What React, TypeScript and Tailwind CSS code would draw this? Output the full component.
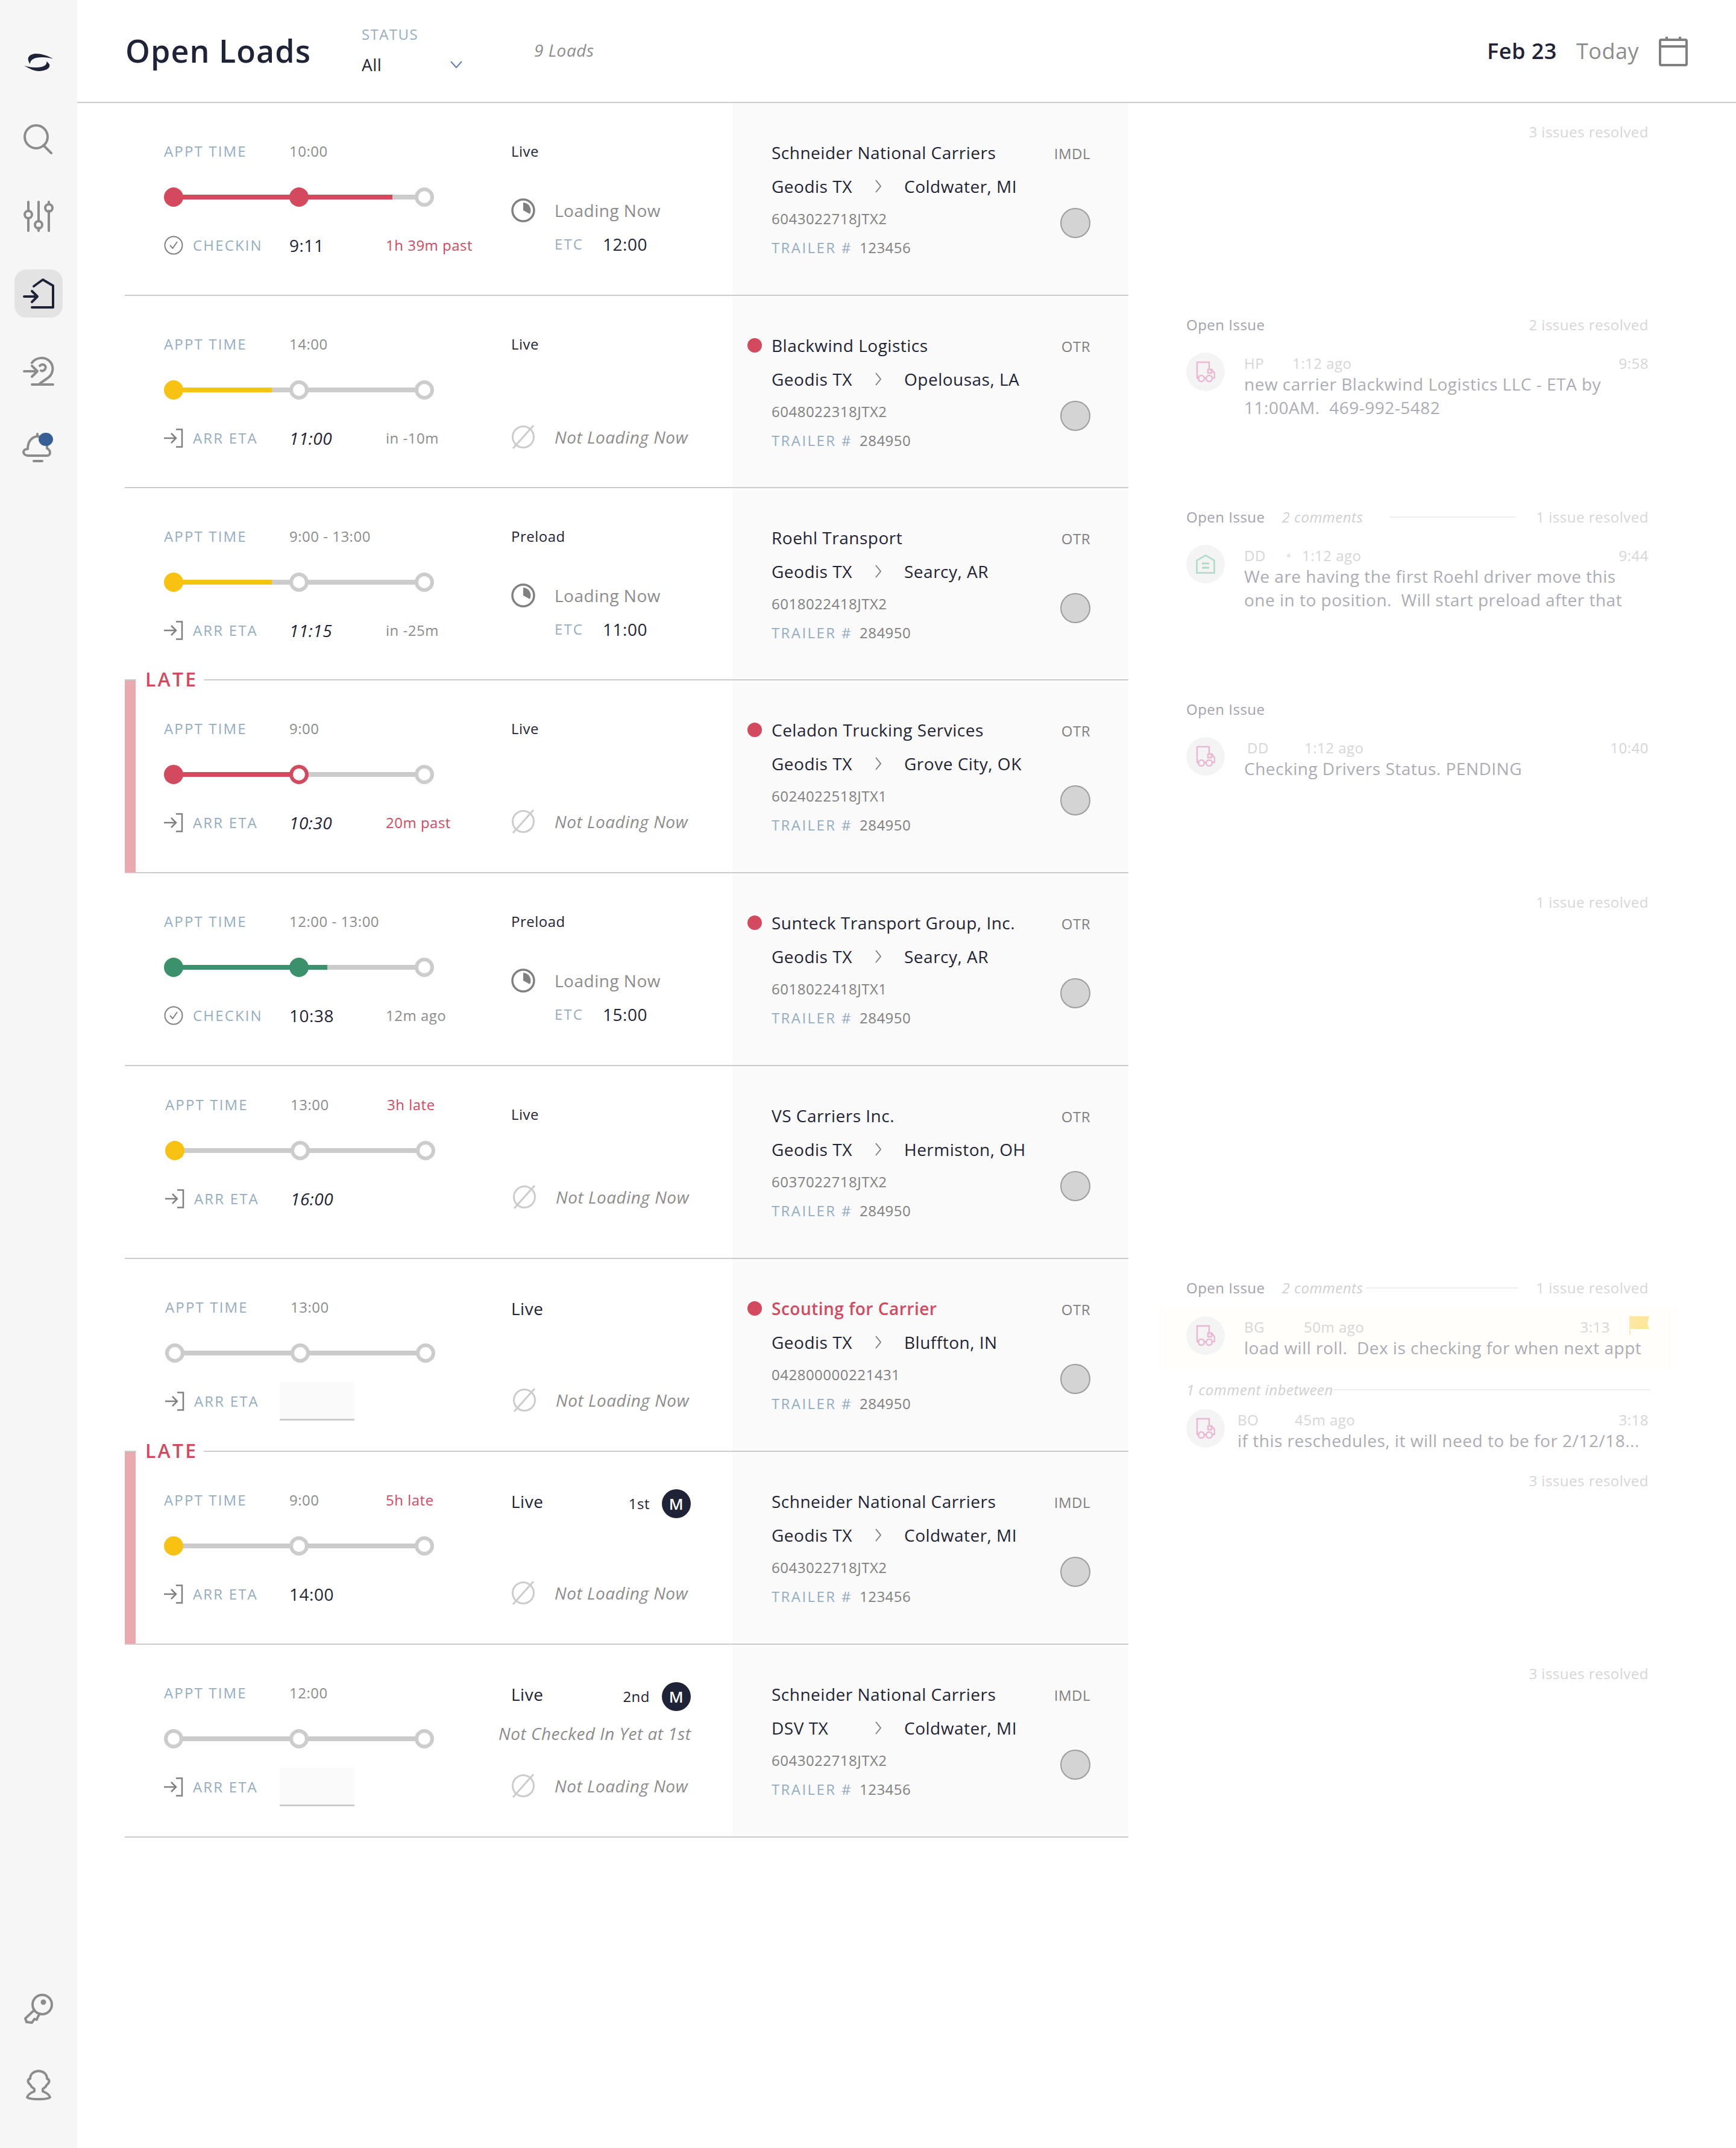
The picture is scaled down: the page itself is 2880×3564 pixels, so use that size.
import React from "react";

const DARK = "#1f2337";

function Logo() {
  return (
    <svg width="48" height="29" viewBox="0 0 48 29">
      <path d="M48 8.4C38 3 28 0 20 0C11 0 5 5 7 11C7.5 14 9 16 10 17C10 12 13 9 20 7C29 5 39 6 48 8.4Z" fill={DARK} />
      <path d="M0 20C9 25 17 29 24 29C34 29 44 25 42 18C41 16 39 14 37 13C38 17 36 20 29 22C20 24 10 23 0 20Z" fill={DARK} />
    </svg>
  );
}
const sideStroke = { fill: "none", stroke: "#8c8c8c", strokeWidth: 4, strokeLinecap: "round" as const, strokeLinejoin: "round" as const };
function SearchIcon() {
  return (
    <svg width="52" height="52" viewBox="0 0 52 52" {...sideStroke}>
      <circle cx="22" cy="22" r="19" />
      <path d="M34 36L47 49" />
    </svg>
  );
}
function SlidersIcon() {
  return (
    <svg width="52" height="52" viewBox="0 0 52 52" {...sideStroke}>
      <path d="M9 2V17M9 29V50M26 2V34M26 45V50M43 2V6M43 17V50" />
      <circle cx="9" cy="23" r="6" />
      <circle cx="26" cy="40" r="6" />
      <circle cx="43" cy="12" r="6" />
    </svg>
  );
}
function HomeInIcon({ color }: { color: string }) {
  return (
    <svg width="52" height="52" viewBox="0 0 52 52" fill="none" stroke={color} strokeWidth="4" strokeLinecap="round" strokeLinejoin="round">
      <path d="M18 14L33 3L50 13V49H15" />
      <path d="M2 31H24M15 22L24 31L15 40" />
    </svg>
  );
}
function TurnInIcon() {
  return (
    <svg width="52" height="52" viewBox="0 0 52 52" {...sideStroke}>
      <path d="M15 12C21 3 36 1 44 9C53 18 50 32 40 38L30 45" />
      <path d="M28 17C33 12 40 17 37 22C36 25 32 26 30 25" />
      <path d="M2 26H24M15 17L24 26L15 35" />
      <path d="M15 48H50M30 45L26 48" />
    </svg>
  );
}
function BellIcon() {
  return (
    <svg width="56" height="56" viewBox="0 0 56 56" className="overflow-visible">
      <path d="M26 9V5" stroke="#8c8c8c" strokeWidth="4" strokeLinecap="round" />
      <path d="M10 30C10 18 16 10 26 9C33 9 40 14 42 22V29C46 31 47 33 47 36C47 39 45 41 42 41H10C6 41 3 38 3 35C3 32 6 30 10 30Z" fill="none" stroke="#8c8c8c" strokeWidth="4" strokeLinejoin="round" />
      <path d="M20 50H34" stroke="#8c8c8c" strokeWidth="4" strokeLinecap="round" />
      <ellipse cx="40" cy="14" rx="12" ry="11" fill="#365f96" />
    </svg>
  );
}
function KeyIcon() {
  return (
    <svg width="52" height="52" viewBox="0 0 52 52" {...sideStroke}>
      <circle cx="32" cy="20" r="16" />
      <path d="M19 29L4 43L6 49L15 50L19 44L23 45L25 40L28 35" />
      <circle cx="34" cy="16" r="2.5" fill="#8c8c8c" />
    </svg>
  );
}
function UserIcon() {
  return (
    <svg width="44" height="52" viewBox="0 0 44 52" {...sideStroke}>
      <path d="M8 15C8 -2 36 -2 36 15C40 16 41 20 37 24C35 25 35 27 33 29L29 32V36C34 38 40 41 41 46C36 50 8 50 3 46C4 41 10 38 15 36V32L11 29C9 27 9 25 7 24C3 20 4 16 8 15Z" />
    </svg>
  );
}
function CalendarIcon() {
  return (
    <svg width="48" height="50" viewBox="0 0 48 50" fill="none" stroke="#808080" strokeWidth="4">
      <rect x="2" y="6" width="44" height="42" rx="2" />
      <path d="M2 17H46M13 1V8M35 1V8" />
    </svg>
  );
}
function Chevron() {
  return (
    <svg width="22" height="14" viewBox="0 0 22 14" fill="none" stroke="#5b7fb5" strokeWidth="2">
      <path d="M2 2L11 12L20 2" />
    </svg>
  );
}
function CheckIcon() {
  return (
    <svg width="32" height="32" viewBox="0 0 32 32" fill="none" stroke="#808080" strokeWidth="2">
      <circle cx="16" cy="16" r="14.5" />
      <path d="M10 16L14.5 21L22 10" />
    </svg>
  );
}
function ArrIcon() {
  return (
    <svg width="32" height="32" viewBox="0 0 32 32" fill="none" stroke="#808080" strokeWidth="2.5">
      <path d="M20 1.5H30V30.5H20" />
      <path d="M0 16H20M12 8L20 16L12 24" />
    </svg>
  );
}
function ClockIcon() {
  return (
    <svg width="40" height="40" viewBox="0 0 40 40">
      <circle cx="20" cy="20" r="18" fill="none" stroke="#808080" strokeWidth="3.5" />
      <path d="M20 7A13 13 0 0 1 31 26L20 20Z" fill="#808080" />
    </svg>
  );
}
function NoIcon() {
  return (
    <svg width="40" height="40" viewBox="0 0 40 40" fill="none" stroke="#cccccc" strokeWidth="3">
      <circle cx="20" cy="20" r="17.5" />
      <path d="M37 1L3 39" />
    </svg>
  );
}
function TruckIcon() {
  return (
    <svg width="32" height="36" viewBox="0 0 32 36" fill="none" stroke="#e9b8d3" strokeWidth="2.5">
      <path d="M6 28H2V2H22V14H26L31 20V28H26" />
      <path d="M20 14H26V20H20Z" />
      <path d="M14 28H18" />
      <circle cx="9" cy="29" r="5" />
      <circle cx="22" cy="29" r="5" />
    </svg>
  );
}
function HouseIcon() {
  return (
    <svg width="32" height="32" viewBox="0 0 32 32" fill="none" stroke="#acdcc8" strokeWidth="2.5">
      <path d="M1.5 30.5V10L16 1.5L30.5 10V30.5Z" />
      <path d="M10 15H22M10 22H22" strokeWidth="3" />
    </svg>
  );
}
function FlagIcon() {
  return (
    <svg width="34" height="32" viewBox="0 0 34 32">
      <path d="M0 0H2V32H0Z" fill="#fdeab0" />
      <path d="M2 1H33L30 12L33 22H2Z" fill="#fde69e" />
    </svg>
  );
}

type Stop = "solid" | "ring" | "accent-ring";
function Dot({ kind, color }: { kind: Stop; color: string }) {
  if (kind === "solid") return <span className="w-8 h-8 rounded-full shrink-0 z-10" style={{ background: color }} />;
  return (
    <span
      className="w-8 h-8 rounded-full shrink-0 bg-white border-[6px] z-10"
      style={{ borderColor: kind === "accent-ring" ? color : "#cccccc" }}
    />
  );
}
function Track({ color, stops, fill }: { color: string; stops: Stop[]; fill: number }) {
  return (
    <div className="relative w-[448px] h-8 flex items-center justify-between">
      <div className="absolute left-2 right-2 top-3 h-2 bg-[#cccccc]" />
      <div className="absolute left-2 top-3 h-2" style={{ width: fill, background: color }} />
      {stops.map((s, i) => (
        <Dot key={i} kind={s} color={color} />
      ))}
    </div>
  );
}

type Load = {
  h: number;
  late?: boolean;
  shift?: boolean;
  raised?: boolean;
  appt: string;
  apptNote?: string;
  color: string;
  stops: Stop[];
  fill: number;
  check: boolean;
  time?: string;
  timeStyle?: "italic" | "upright";
  note?: string;
  noteRed?: boolean;
  kind: string;
  kindBig?: boolean;
  stop?: string;
  notChecked?: boolean;
  etc?: string;
  carrier: string;
  carrierRed?: boolean;
  dot?: boolean;
  mode: string;
  origin: string;
  dest: string;
  id: string;
  trailer: string;
};

const RED = "#d3495e";
const YEL = "#f8c212";
const GRN = "#3a916c";
const R: Stop = "ring";
const S: Stop = "solid";

const loads: Load[] = [
  { h: 320, appt: "10:00", color: RED, stops: [S, S, R], fill: 371, check: true, time: "9:11", timeStyle: "upright", note: "1h 39m past", noteRed: true, kind: "Live", etc: "12:00", carrier: "Schneider National Carriers", mode: "IMDL", origin: "Geodis TX", dest: "Coldwater, MI", id: "6043022718JTX2", trailer: "123456" },
  { h: 319, appt: "14:00", color: YEL, stops: [S, R, R], fill: 171, check: false, time: "11:00", timeStyle: "italic", note: "in -10m", kind: "Live", carrier: "Blackwind Logistics", dot: true, mode: "OTR", origin: "Geodis TX", dest: "Opelousas, LA", id: "6048022318JTX2", trailer: "284950" },
  { h: 319, appt: "9:00 - 13:00", color: YEL, stops: [S, R, R], fill: 171, check: false, time: "11:15", timeStyle: "italic", note: "in -25m", kind: "Preload", etc: "11:00", carrier: "Roehl Transport", mode: "OTR", origin: "Geodis TX", dest: "Searcy, AR", id: "6018022418JTX2", trailer: "284950" },
  { h: 320, late: true, appt: "9:00", color: RED, stops: [S, "accent-ring", R], fill: 208, check: false, time: "10:30", timeStyle: "italic", note: "20m past", noteRed: true, kind: "Live", carrier: "Celadon Trucking Services", dot: true, mode: "OTR", origin: "Geodis TX", dest: "Grove City, OK", id: "6024022518JTX1", trailer: "284950" },
  { h: 320, appt: "12:00 - 13:00", color: GRN, stops: [S, S, R], fill: 263, check: true, time: "10:38", timeStyle: "upright", note: "12m ago", kind: "Preload", etc: "15:00", carrier: "Sunteck Transport Group, Inc.", dot: true, mode: "OTR", origin: "Geodis TX", dest: "Searcy, AR", id: "6018022418JTX1", trailer: "284950" },
  { h: 320, shift: true, raised: true, appt: "13:00", apptNote: "3h late", color: YEL, stops: [S, R, R], fill: 0, check: false, time: "16:00", timeStyle: "italic", kind: "Live", carrier: "VS Carriers Inc.", mode: "OTR", origin: "Geodis TX", dest: "Hermiston, OH", id: "6037022718JTX2", trailer: "284950" },
  { h: 320, shift: true, appt: "13:00", color: YEL, stops: [R, R, R], fill: 0, check: false, kind: "Live", kindBig: true, carrier: "Scouting for Carrier", carrierRed: true, dot: true, mode: "OTR", origin: "Geodis TX", dest: "Bluffton, IN", id: "042800000221431", trailer: "284950" },
  { h: 320, late: true, appt: "9:00", apptNote: "5h late", color: YEL, stops: [S, R, R], fill: 0, check: false, time: "14:00", timeStyle: "upright", kind: "Live", kindBig: true, stop: "1st", carrier: "Schneider National Carriers", mode: "IMDL", origin: "Geodis TX", dest: "Coldwater, MI", id: "6043022718JTX2", trailer: "123456" },
  { h: 320, appt: "12:00", color: YEL, stops: [R, R, R], fill: 0, check: false, kind: "Live", kindBig: true, stop: "2nd", notChecked: true, carrier: "Schneider National Carriers", mode: "IMDL", origin: "DSV TX", dest: "Coldwater, MI", id: "6043022718JTX2", trailer: "123456" },
];

function LoadCard({ l }: { l: Load }) {
  const loadingGap = l.notChecked ? "mt-[47px]" : l.raised ? "mt-[97px]" : l.kindBig ? "mt-[112px]" : "mt-[114px]";
  return (
    <div className={`flex w-[1008px] shrink-0 ${l.shift ? "pl-[67px]" : "pl-[65px]"}`}>
      <div className={`${l.shift ? "w-[574px]" : "w-[576px]"} shrink-0 flex flex-col ${l.raised ? "pt-[44px]" : "pt-[60px]"}`}>
        <div className="h-10 flex items-center text-[24px]">
          <span className="w-[208px] tracking-[0.09em] text-[#94adc3]">APPT TIME</span>
          <span className="w-[160px] text-[#8c8c8c] whitespace-nowrap">{l.appt}</span>
          {l.apptNote && <span className="text-[#d3495e]">{l.apptNote}</span>}
        </div>
        <div className="mt-[40px]">
          <Track color={l.color} stops={l.stops} fill={l.fill} />
        </div>
        <div className="mt-[44px] h-10 flex items-center">
          <span className="w-8 shrink-0 flex">{l.check ? <CheckIcon /> : <ArrIcon />}</span>
          <span className="w-[176px] pl-4 text-[24px] tracking-[0.09em] text-[#94adc3]">{l.check ? "CHECKIN" : "ARR ETA"}</span>
          {l.time ? (
            <span className={`w-[160px] text-[28px] text-[#1f2337] ${l.timeStyle === "italic" ? "italic" : "font-medium"}`}>{l.time}</span>
          ) : (
            <span className={`w-[124px] h-16 ${l.shift ? "-ml-[18px]" : "-ml-[16px]"} mr-[52px] bg-[#fafafa] border-b-[3px] border-[#cccccc]`} />
          )}
          {l.note && <span className={`text-[24px] whitespace-nowrap ${l.noteRed ? "text-[#d3495e]" : "text-[#8c8c8c]"}`}>{l.note}</span>}
        </div>
      </div>
      <div className={`w-[296px] shrink-0 flex flex-col ${l.kindBig ? "pt-[62px]" : "pt-[60px]"}`}>
        <div className="h-10 flex items-center justify-between">
          <span className={`${l.kindBig ? "text-[28px]" : "text-[24px]"} text-[#1f2337]`}>{l.kind}</span>
          {l.stop && (
            <span className="mt-2 -mr-[2px] flex items-center gap-[20px] text-[24px] text-[#1f2337]">
              {l.stop}
              <span className="w-12 h-12 rounded-full bg-[#1f2337] text-white text-[26px] font-semibold flex items-center justify-center">M</span>
            </span>
          )}
        </div>
        {l.notChecked ? (
          <div className="mt-[25px] -ml-[21px] h-10 text-[28px] italic text-[#8c8c8c] whitespace-nowrap leading-10">Not Checked In Yet at 1st</div>
        ) : null}
        {l.etc ? (
          <>
            <div className="mt-[58px] h-10 flex items-center text-[28px] text-[#8c8c8c]">
              <span className="w-[72px] flex shrink-0"><ClockIcon /></span>Loading Now
            </div>
            <div className="mt-[16px] h-10 flex items-center pl-[72px]">
              <span className="w-[80px] text-[24px] tracking-[0.09em] text-[#94adc3]">ETC</span>
              <span className="text-[28px] font-medium text-[#1f2337]">{l.etc}</span>
            </div>
          </>
        ) : (
          <div className={`${loadingGap} ${l.shift ? "pl-[2px]" : ""} h-10 flex items-center text-[28px] italic text-[#8c8c8c] whitespace-nowrap`}>
            <span className="w-[72px] flex shrink-0"><NoIcon /></span>Not Loading Now
          </div>
        )}
      </div>
    </div>
  );
}

function InfoPanel({ l }: { l: Load }) {
  return (
    <div className="w-[657px] shrink-0 bg-[#fafafa] flex pl-[65px] pr-[63px] pt-[62px] justify-between">
      <div className="flex flex-col relative">
        <div className={`h-10 flex items-center text-[28px] whitespace-nowrap ${l.carrierRed ? "text-[#d3495e] font-semibold" : "text-[#1f2337]"}`}>
          {l.dot && <span className="absolute -left-10 top-2 w-6 h-6 rounded-full bg-[#d3495e]" />}
          {l.carrier}
        </div>
        <div className="mt-4 h-10 flex items-center text-[28px] text-[#1f2337] whitespace-nowrap">
          <span className="w-[174px]">{l.origin}</span>
          <svg className="-ml-[2px] mr-[38px] shrink-0" width="10" height="22" viewBox="0 0 10 22" fill="none" stroke="#808080" strokeWidth="2"><path d="M1 1L9 11L1 21" /></svg>
          {l.dest}
        </div>
        <div className="mt-[14px] h-10 flex items-center text-[24px] text-[#808080]">{l.id}</div>
        <div className="mt-2 h-10 flex items-center text-[24px] text-[#808080] whitespace-nowrap">
          <span className="tracking-[0.1em] text-[#94adc3] mr-3">TRAILER #</span>
          {l.trailer}
        </div>
      </div>
      <div className="flex flex-col items-end">
        <div className="h-10 mt-[2px] flex items-center text-[24px] text-[#808080]">{l.mode}</div>
        <div className="mt-[70px] w-[50px] h-[50px] rounded-full bg-[#d4d4d4] border-2 border-[#9c9c9c]" />
      </div>
    </div>
  );
}

function IssueHead({ open, comments, resolved, lineW }: { open?: boolean; comments?: boolean; resolved?: string; lineW?: string }) {
  return (
    <div className="h-10 flex items-center text-[24px] whitespace-nowrap">
      {open && <span className="font-medium text-[#a2a2ac]">Open Issue</span>}
      {comments && <span className="ml-[28px] italic text-[#d0d0d0]">2 comments</span>}
      {lineW && <span className={`${lineW} h-[2px] bg-[#eeeeee]`} />}
      {resolved && <span className="ml-auto text-[#d6d6d6]">{resolved}</span>}
    </div>
  );
}

function Comment({ icon, who, ago, at, lines, dot, gapAgo, left, flag }: { icon: "truck" | "house"; who: string; ago: string; at: string; lines: string[]; dot?: boolean; gapAgo: string; left: string; flag?: boolean }) {
  return (
    <div className="flex">
      <div className="w-16 h-16 shrink-0 rounded-full bg-[#f4f4f5] flex items-center justify-center">{icon === "truck" ? <TruckIcon /> : <HouseIcon />}</div>
      <div className={`flex-1 min-w-0 ${left}`}>
        <div className="h-9 flex items-center text-[24px] text-[#d6d6d6] whitespace-nowrap">
          <span className={gapAgo}>{who}</span>
          {dot && <span className="w-[6px] h-[6px] rounded-full bg-[#e4e4e4] mr-[19px]" />}
          <span>{ago}</span>
          <span className="ml-auto">{at}</span>
          {flag && <span className="ml-8 -mr-[2px] flex -mt-[6px]"><FlagIcon /></span>}
        </div>
        <div className="-mt-1">
          {lines.map((t, i) => (
            <div key={i} className="h-[39px] flex items-center text-[28px] text-[#acacb5] whitespace-pre">{t}</div>
          ))}
        </div>
      </div>
    </div>
  );
}

function Issues({ i }: { i: number }) {
  const body = (() => {
    switch (i) {
      case 0:
        return <IssueHead resolved="3 issues resolved" />;
      case 1:
        return (
          <>
            <IssueHead open resolved="2 issues resolved" />
            <div className="mt-[26px]">
              <Comment icon="truck" who="HP" ago="1:12 ago" at="9:58" gapAgo="w-[80px]" left="pl-8" lines={["new carrier Blackwind Logistics LLC - ETA by", "11:00AM.  469-992-5482"]} />
            </div>
          </>
        );
      case 2:
        return (
          <>
            <IssueHead open comments resolved="1 issue resolved" lineW="ml-[44px] w-[210px]" />
            <div className="mt-[26px]">
              <Comment icon="house" who="DD" ago="1:12 ago" at="9:44" gapAgo="w-[71px]" dot left="pl-8" lines={["We are having the first Roehl driver move this", "one in to position.  Will start preload after that"]} />
            </div>
          </>
        );
      case 3:
        return (
          <>
            <IssueHead open />
            <div className="mt-[26px]">
              <Comment icon="truck" who="DD" ago="1:12 ago" at="10:40" gapAgo="w-[95px] ml-[5px]" left="pl-8" lines={["Checking Drivers Status. PENDING"]} />
            </div>
          </>
        );
      case 4:
        return <IssueHead resolved="1 issue resolved" />;
      case 6:
        return (
          <>
            <IssueHead open comments resolved="1 issue resolved" lineW="ml-[6px] w-[250px]" />
            <div className="mt-[11px] -mx-[45px] px-[45px] pt-4 h-[104px] bg-[#fffefa]">
              <Comment icon="truck" who="BG" ago="50m ago" at="3:13" gapAgo="w-[99px]" flag left="pl-8" lines={["load will roll.  Dex is checking for when next appt"]} />
            </div>
            <div className="mt-4 h-9 flex items-center text-[24px] italic text-[#d0d0d0] whitespace-nowrap">
              1 comment inbetween<span className="flex-1 h-[2px] bg-[#eeeeee] -mr-[3px]" />
            </div>
            <div className="mt-[14px]">
              <Comment icon="truck" who="BO" ago="45m ago" at="3:18" gapAgo="w-[95px]" left="pl-[21px]" lines={["if this reschedules, it will need to be for 2/12/18..."]} />
            </div>
          </>
        );
      case 7:
      case 8:
        return <IssueHead resolved="3 issues resolved" />;
      default:
        return null;
    }
  })();
  return <div className="w-[767px] ml-[96px] pt-[28px] shrink-0">{body}</div>;
}

function Row({ l, i }: { l: Load; i: number }) {
  return (
    <div className="flex relative" style={{ height: l.h }}>
      <div className="ml-[79px] w-[1665px] shrink-0 flex border-b-2 border-[#cccccc] relative">
        {l.late && <div className="absolute left-0 top-0 bottom-0 w-[18px] bg-[#e9a9af]" />}
        {l.late && (
          <div className="absolute left-[19px] -top-[24px] h-[44px] w-[112px] bg-white pl-[15px] text-[32px] leading-[44px] font-semibold tracking-[0.1em] text-[#d3495e]">LATE</div>
        )}
        <LoadCard l={l} />
        <InfoPanel l={l} />
      </div>
      <Issues i={i} />
    </div>
  );
}

export default function App() {
  return (
    <div className="flex w-[2880px] h-[3564px] bg-white overflow-hidden tracking-[0.5px] font-['Open_Sans',sans-serif]">
      <aside className="w-[128px] shrink-0 bg-[#f6f6f6] flex flex-col items-center">
        <div className="mt-[89px] flex"><Logo /></div>
        <div className="mt-[87px] flex"><SearchIcon /></div>
        <div className="mt-[76px] flex"><SlidersIcon /></div>
        <div className="mt-[62px] w-20 h-20 rounded-[20px] bg-[#e3e3e3] flex items-center justify-center"><HomeInIcon color={DARK} /></div>
        <div className="mt-[63px] flex"><TurnInIcon /></div>
        <div className="mt-[73px] flex"><BellIcon /></div>
        <div className="mt-auto flex"><KeyIcon /></div>
        <div className="mt-[76px] mb-[78px] flex"><UserIcon /></div>
      </aside>
      <main className="flex-1 min-w-0">
        <header className="h-[171px] border-b-2 border-[#cccccc] flex items-center pl-[82px] pr-[80px]">
          <h1 className="w-[392px] -ml-[2px] -mt-[2px] text-[52px] font-semibold tracking-[0.02em] text-[#1f2337] whitespace-nowrap">Open Loads</h1>
          <div className="w-[286px] flex flex-col -mt-[2px]">
            <span className="h-8 flex items-center text-[24px] tracking-[0.06em] text-[#94adc3]">STATUS</span>
            <span className="mt-[14px] w-[168px] h-10 flex items-center justify-between text-[28px] text-[#1f2337]">All<Chevron /></span>
          </div>
          <span className="-mt-1 text-[28px] italic text-[#8c8c8c]">9 Loads</span>
          <span className="ml-auto text-[36px] font-semibold text-[#1f2337]">Feb 23</span>
          <span className="ml-8 mr-[33px] text-[36px] text-[#8c8c8c]">Today</span>
          <CalendarIcon />
        </header>
        {loads.map((l, i) => (
          <Row key={i} l={l} i={i} />
        ))}
      </main>
    </div>
  );
}
